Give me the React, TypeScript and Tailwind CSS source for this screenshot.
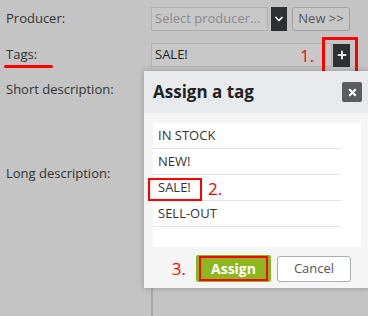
import { ChevronDown, Plus, X } from "lucide-react";

const tags = ["IN STOCK", "NEW!", "SALE!", "SELL-OUT"];

function Label({ children }: { children: React.ReactNode }) {
  return <div className="w-[145px] shrink-0 text-[13px] text-[#333]">{children}</div>;
}

function AssignTagModal() {
  return (
    <div className="absolute left-[144px] top-[71px] w-[226px] shadow-[0_0_6px_rgba(0,0,0,0.25)]">
      <div className="flex h-[42px] items-center justify-between bg-[#e8eaed] pl-[9px] pr-[8px]">
        <span className="text-[17px] font-bold text-[#222]">Assign a tag</span>
        <button className="flex h-[20px] w-[20px] items-center justify-center rounded-[2px] bg-[#5b5e61] text-white">
          <X size={11} strokeWidth={4.5} />
        </button>
      </div>
      <div className="bg-[#f5f5f5] px-[9px] pb-[6px] pt-[10px]">
        <div className="h-[124px] bg-white">
          <ul className="w-[188px]">
            {tags.map((t) => (
              <li
                key={t}
                className="relative flex h-[26px] items-center border-b border-[#e4e4e4] pl-[5px] text-[13px] text-[#333]"
              >
                {t}
                {t === "SALE!" && (
                  <>
                    <span className="absolute -left-[5px] top-[3px] h-[23px] w-[54px] border-2 border-[#f00]" />
                    <span className="absolute left-[55px] top-[1px] text-[17px] text-[#f00]">2.</span>
                  </>
                )}
              </li>
            ))}
          </ul>
        </div>
        <div className="mt-[8px] flex items-center justify-end gap-[6px] pr-[10px]">
          <span className="mr-[4px] text-[17px] text-[#f00]">3.</span>
          <button className="relative h-[27px] w-[75px] rounded-[2px] bg-[#8db61f] text-[14px] font-bold text-white">
            <span className="absolute inset-x-[3px] inset-y-[1px] border-2 border-[#f00]" />
            Assign
          </button>
          <button className="h-[26px] w-[74px] rounded-[3px] border border-[#a8acb3] bg-white text-[13px] text-[#555]">
            Cancel
          </button>
        </div>
      </div>
    </div>
  );
}

export default function App() {
  return (
    <div
      className="relative h-[316px] w-[368px] overflow-hidden bg-[#c4c4c4]"
      style={{ fontFamily: '"Open Sans", sans-serif' }}
    >
      <div className="flex flex-col pl-[6px] pt-[7px]">
        <div className="flex h-[24px] items-center">
          <Label>Producer:</Label>
          <div className="flex h-[24px] w-[117px] items-center border border-[#b0b0b0] bg-[#c8c8c8] pl-[3px] text-[13px] text-[#8a8a8a]">
            Select producer...
          </div>
          <div className="ml-[3px] flex h-[24px] w-[16px] items-center justify-center bg-[#2d3033] text-white">
            <ChevronDown size={12} strokeWidth={3.5} />
          </div>
          <button className="ml-[5px] h-[24px] w-[58px] rounded-[3px] border border-[#a0a0a0] bg-[#c8c8c8] text-[13px] text-[#555]">
            New &gt;&gt;
          </button>
        </div>

        <div className="mt-[12px] flex h-[24px] items-center">
          <div className="relative w-[145px] shrink-0 text-[13px] text-[#333]">
            Tags:
            <span className="absolute -left-[2px] top-[20px] h-[3px] w-[49px] rounded-full bg-[#f00]" />
          </div>
          <div className="relative flex h-[24px] w-[181px] items-center border border-[#b0b0b0] bg-[#c8c8c8] pl-[3px] text-[13px] text-[#222]">
            SALE!
            <span className="absolute left-[148px] top-[-1px] text-[17px] text-[#f00]">1.</span>
          </div>
          <div className="relative ml-[1px] flex h-[23px] w-[17px] items-center justify-center bg-[#2d3033] text-white">
            <Plus size={12} strokeWidth={4} className="text-[#e8e8e8]" />
            <span className="absolute -left-[11px] -top-[7px] h-[37px] w-[36px] border-[3px] border-[#f00]" />
          </div>
        </div>

        <div className="mt-[12px] flex h-[22px] items-center">
          <Label>Short description:</Label>
        </div>

        <div className="mt-[62px] flex h-[22px] items-center">
          <Label>Long description:</Label>
        </div>
      </div>

      <div className="absolute left-[151px] top-[287px] h-[40px] w-[2px] bg-[#a9a9a9]" />

      <AssignTagModal />
    </div>
  );
}
